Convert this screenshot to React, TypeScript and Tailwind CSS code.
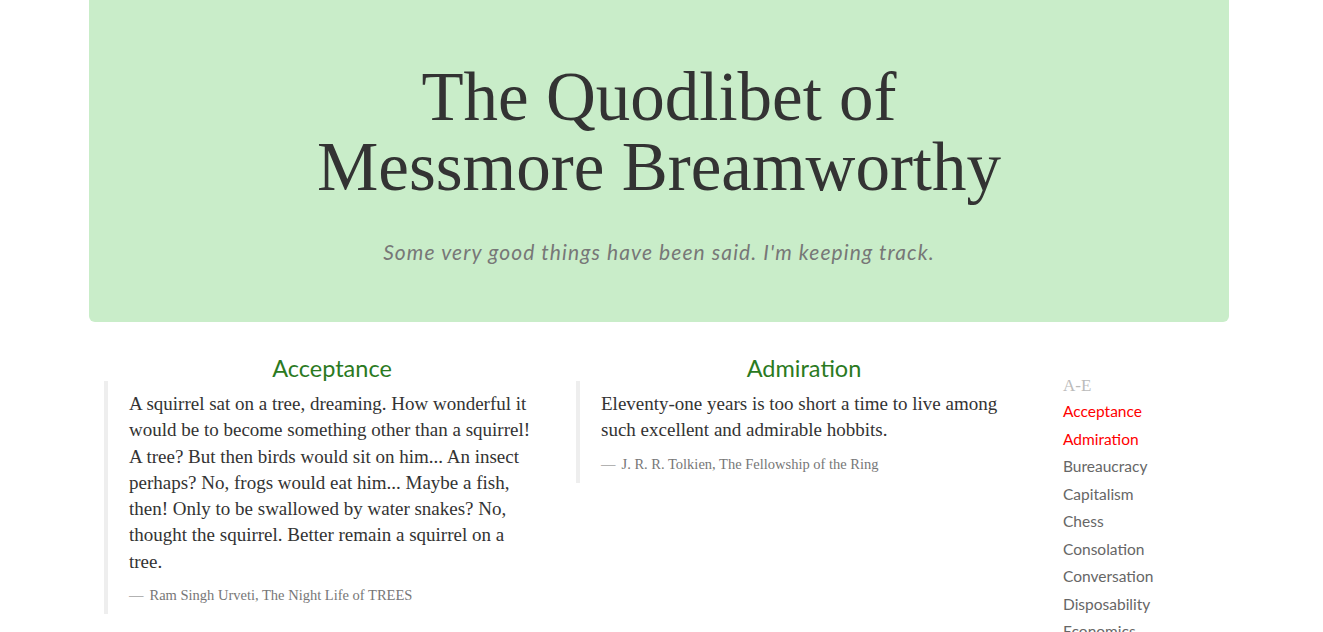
const serif = "font-['Liberation_Serif',serif]";
const sans = "font-['Lato',sans-serif]";

const quotes = [
    {
        topic: "Acceptance",
        text: "A squirrel sat on a tree, dreaming. How wonderful it would be to become something other than a squirrel! A tree? But then birds would sit on him... An insect perhaps? No, frogs would eat him... Maybe a fish, then! Only to be swallowed by water snakes? No, thought the squirrel. Better remain a squirrel on a tree.",
        source: "Ram Singh Urveti, The Night Life of TREES",
    },
    {
        topic: "Admiration",
        text: "Eleventy-one years is too short a time to live among such excellent and admirable hobbits.",
        source: "J. R. R. Tolkien, The Fellowship of the Ring",
    },
];

const topics = [
    { name: "Acceptance", seen: true },
    { name: "Admiration", seen: true },
    { name: "Bureaucracy" },
    { name: "Capitalism" },
    { name: "Chess" },
    { name: "Consolation" },
    { name: "Conversation" },
    { name: "Disposability" },
    { name: "Economics" },
];

const Quote = ({ topic, text, source }: { topic: string; text: string; source: string }) => {
    return (
        <div className="w-[456px] shrink-0">
            <h2 className={`${sans} text-center text-[23.5px] leading-[26px] text-[#2b7a1f]`}>{topic}</h2>
            <blockquote className="border-l-4 border-[#eeeeee] pl-[21px] pr-[20px] pt-[10px] pb-[9px]">
                <p className={`${serif} text-[19px] leading-[26.3px] text-[#333333]`}>{text}</p>
                <footer className={`${serif} mt-[10px] text-[14.5px] leading-[20px] text-[#777777]`}>
                    <span className="mr-[6px]">—</span>
                    {source}
                </footer>
            </blockquote>
        </div>
    );
};

export default function App() {
    return (
        <div className="min-h-screen bg-white">
            <div className="ml-[89px] w-[1140px]">
                <header className="flex h-[322px] flex-col items-center rounded-b-md bg-[#c9edc9] pt-[62px]">
                    <h1 className={`${serif} text-center text-[69px] leading-[70px] text-[#333333]`}>
                        <span className="block">The Quodlibet of</span>
                        <span className="block">Messmore Breamworthy</span>
                    </h1>
                    <p className={`${sans} mt-[34px] text-[21px] italic tracking-[1.1px] text-[#777777]`}>
                        Some very good things have been said. I'm keeping track.
                    </p>
                </header>

                <div className="mt-[33px] flex">
                    <div className="ml-[15px] flex gap-[16px]">
                        {quotes.map((q) => (
                            <Quote key={q.topic} {...q} />
                        ))}
                    </div>
                    <nav className="ml-[31px] pt-[19px]">
                        <div className={`${serif} text-[17px] leading-[24px] text-[#bbbbbb]`}>A-E</div>
                        <ul>
                            {topics.map((t) => (
                                <li
                                    key={t.name}
                                    className={`${sans} text-[15.5px] leading-[27.5px] ${t.seen ? "text-[#ff0000]" : "text-[#666666]"}`}
                                >
                                    {t.name}
                                </li>
                            ))}
                        </ul>
                    </nav>
                </div>
            </div>
        </div>
    );
}
